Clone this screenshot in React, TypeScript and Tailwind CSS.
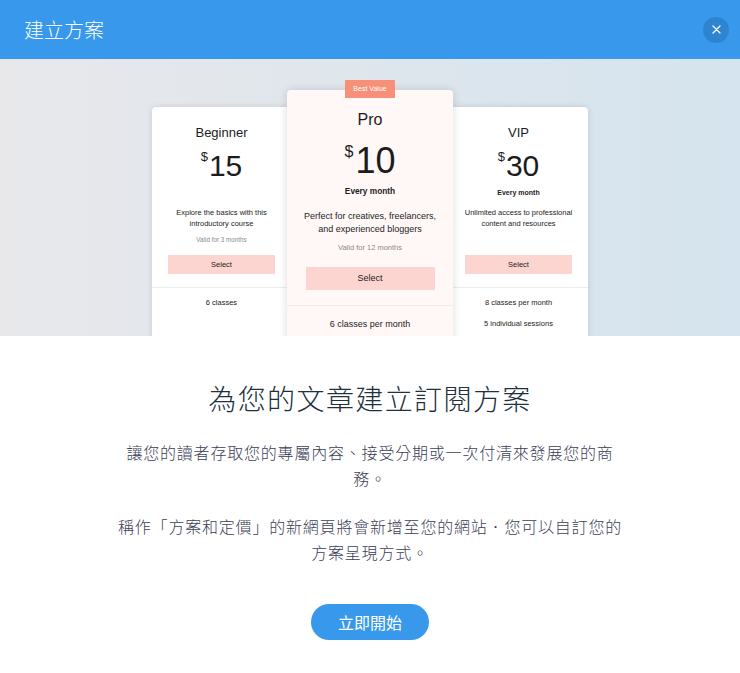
import React from "react";

const sans = { fontFamily: '"Liberation Sans", Arial, sans-serif' };

function SmallCard({
  title,
  price,
  every,
  desc,
  valid,
  features,
}: {
  title: string;
  price: string;
  every?: string;
  desc: string[];
  valid?: string;
  features: string[];
}) {
  return (
    <div
      className="mt-[17px] w-[139px] h-[260px] shrink-0 rounded-t-[4px] bg-white shadow-[0_0_6px_rgba(0,0,0,0.12)] flex flex-col items-center text-[#1c1c1c]"
      style={sans}
    >
      <div className="pt-[18px] h-[34px] text-[13px] leading-[16px]">{title}</div>
      <div className="mt-[8px] h-[34px] flex items-start justify-center">
        <span className="text-[13px] leading-[14px] mt-[1px] mr-[1px]">$</span>
        <span className="text-[30px] leading-[34px]">{price}</span>
      </div>
      <div className="mt-[5px] h-[10px] text-[7px] leading-[10px] font-bold">{every ?? ""}</div>
      <div className="mt-[9px] h-[22px] text-[7.5px] leading-[11px] text-center">
        {desc.map((d) => (
          <div key={d}>{d}</div>
        ))}
      </div>
      <div className="mt-[6px] h-[10px] text-[6.3px] leading-[10px] text-[#8a8a8a]">{valid ?? ""}</div>
      <div className="mt-[10px] h-[19px] w-[107px] bg-[#fdd5d0] flex items-center justify-center text-[7.5px]">
        Select
      </div>
      <div className="mt-[13px] w-full border-t border-[#ececec] flex flex-col items-center pt-[9px] gap-[10px] text-[7.5px] leading-[11px]">
        {features.map((f) => (
          <div key={f}>{f}</div>
        ))}
      </div>
    </div>
  );
}

function ProCard() {
  return (
    <div
      className="relative z-10 -mx-[4px] w-[166px] h-[260px] shrink-0 rounded-t-[4px] bg-[#fff8f7] shadow-[0_0_8px_rgba(0,0,0,0.14)] flex flex-col items-center text-[#1c1c1c]"
      style={sans}
    >
      <div className="absolute -top-[10px] left-1/2 -translate-x-1/2 w-[50px] h-[18px] bg-[#f88f78] text-white text-[7px] flex items-center justify-center">
        Best Value
      </div>
      <div className="pt-[20px] h-[40px] text-[16px] leading-[20px]">Pro</div>
      <div className="mt-[11px] h-[40px] flex items-start justify-center">
        <span className="text-[16px] leading-[18px] mt-[2px] mr-[2px]">$</span>
        <span className="text-[36px] leading-[40px]">10</span>
      </div>
      <div className="mt-[4px] h-[12px] text-[8.3px] leading-[12px] font-bold">Every month</div>
      <div className="mt-[13px] h-[26px] text-[9px] leading-[13px] text-center">
        <div>Perfect for creatives, freelancers,</div>
        <div>and experienced bloggers</div>
      </div>
      <div className="mt-[7px] h-[10px] text-[7.5px] leading-[10px] text-[#8a8a8a]">Valid for 12 months</div>
      <div className="mt-[14px] h-[23px] w-[129px] bg-[#fdd5d0] flex items-center justify-center text-[9px]">
        Select
      </div>
      <div className="mt-[15px] w-full border-t border-[#ececec] flex flex-col items-center pt-[12px] text-[9px] leading-[12px]">
        <div>6 classes per month</div>
      </div>
    </div>
  );
}

export default function App() {
  return (
    <div className="w-[740px] h-[673px] bg-white overflow-hidden" style={{ fontFamily: '"Noto Sans CJK TC", "Noto Sans", sans-serif' }}>
      <header className="h-[59px] bg-[#3899ec] flex items-center justify-between pl-[24px] pr-[11px]">
        <h1 className="text-white text-[20px] leading-none font-light">建立方案</h1>
        <button className="w-[26px] h-[26px] rounded-full bg-[#2f84d0] flex items-center justify-center">
          <svg width="9" height="9" viewBox="0 0 9 9" fill="none" stroke="white" strokeWidth="1.3" strokeLinecap="round">
            <path d="M1 1 L8 8 M8 1 L1 8" />
          </svg>
        </button>
      </header>
      <div className="h-[277px] overflow-hidden bg-gradient-to-r from-[#e8e8eb] to-[#d5e4ee] flex justify-center items-start pt-[31px]">
        <SmallCard
          title="Beginner"
          price="15"
          desc={["Explore the basics with this", "introductory course"]}
          valid="Valid for 3 months"
          features={["6 classes"]}
        />
        <ProCard />
        <SmallCard
          title="VIP"
          price="30"
          every="Every month"
          desc={["Unlimited access to professional", "content and resources"]}
          features={["8 classes per month", "5 individual sessions"]}
        />
      </div>
      <div className="flex flex-col items-center pt-[44px]">
        <h2 className="text-[28px] leading-[36px] tracking-[1.4px] text-[#20303c] font-light">為您的文章建立訂閱方案</h2>
        <p className="mt-[23px] w-[512px] text-center text-[16px] leading-[26px] tracking-[0.8px] text-[#3b4057] font-light">
          讓您的讀者存取您的專屬內容、接受分期或一次付清來發展您的商務。
        </p>
        <p className="mt-[22px] w-[512px] text-center text-[16px] leading-[26px] tracking-[0.8px] text-[#3b4057] font-light">
          稱作「方案和定價」的新網頁將會新增至您的網站．您可以自訂您的方案呈現方式。
        </p>
        <button className="mt-[39px] w-[118px] h-[36px] rounded-full bg-[#3899ec] text-white text-[16px] flex items-center justify-center">
          立即開始
        </button>
      </div>
    </div>
  );
}
